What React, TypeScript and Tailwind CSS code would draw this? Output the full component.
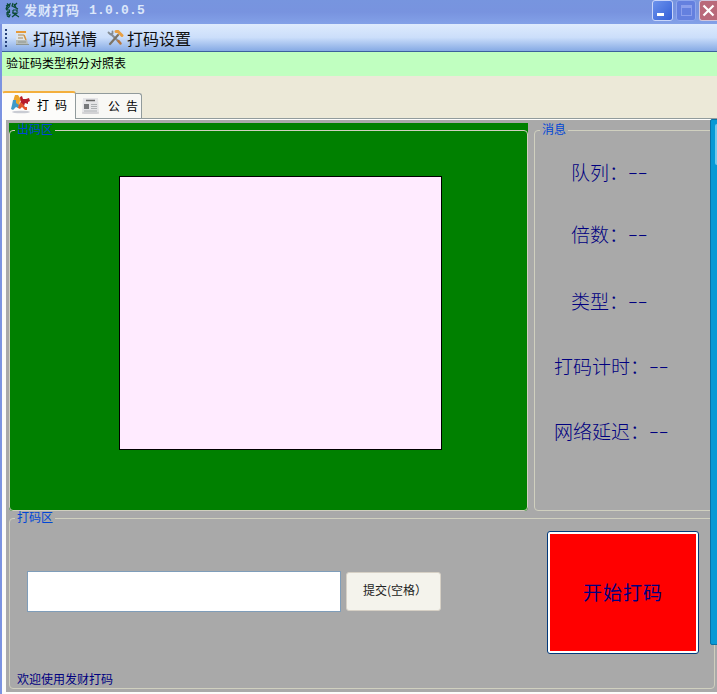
import type { ReactNode } from "react";

const sans = "font-['Liberation_Sans','Noto_Sans_CJK_SC',sans-serif]";
const cjk = "font-['Noto_Sans_CJK_SC',sans-serif]";

function Logo() {
  return (
    <svg width="15" height="16" viewBox="0 0 15 16" fill="none" stroke="#0b4a35" strokeWidth="1.200">
      <path d="M1 4l4-2-1 3-3 3M2 1.500l3 3M8 1L7 4l6 3M12 1L9 4M1.500 8h3v2.500H2V13h3l-1 2-2-1M8 8h4v2M8 8v2.500M7 11h5l-5 4M8 11l6 4" />
      <path d="M3 3L1 7M9 2l2 4M3 9v4" strokeWidth="1.500" />
    </svg>
  );
}

function DetailsIcon() {
  return (
    <svg width="15" height="16" viewBox="0 0 15 16">
      <path d="M2 1h10l-1 10H1z" fill="#dfe5e8" />
      <path d="M1 2h10" stroke="#e79a38" strokeWidth="2" />
      <path d="M3 5h6M3 8h5" stroke="#a98a5c" />
      <path d="M9 5l2 5" stroke="#d8943c" strokeWidth="1.500" />
      <path d="M1 10h11l1 4H1z" fill="#b7bdb9" />
      <path d="M1 14.500h13M3 12h8" stroke="#8e9590" />
    </svg>
  );
}

function ToolsIcon() {
  return (
    <svg width="17" height="17" viewBox="0 0 17 17" fill="none" strokeLinecap="round">
      <path d="M4 5l8 8" stroke="#858d95" strokeWidth="2.200" />
      <path d="M1.500 3.500l2 2 2-1V2.500" stroke="#848c94" strokeWidth="1.800" />
      <path d="M11 6l-8 9" stroke="#7c7466" strokeWidth="2.200" />
      <path d="M9 2.500l2 0 4 4" stroke="#e8a044" strokeWidth="3" />
      <path d="M11.500 12l2 2.500" stroke="#b8763e" strokeWidth="2.500" />
    </svg>
  );
}

function PuzzleIcon() {
  return (
    <svg width="23" height="21" viewBox="0 0 23 21">
      <ellipse cx="12" cy="19" rx="9" ry="1.300" fill="#c9ccd3" />
      <path d="M5 5l1-3 3 0 2 3 2 0 0 2-2 1-1 3 1 4-2 0-3-4-2-1z" fill="#eda52b" />
      <path d="M4 7l3 0 0 3 3 2-1 3-2-1-3 3-2-1 1-4z" fill="#3f9ac8" />
      <path d="M11 4l2-1 1 3 3 0 3-1 1 3-2 1 0 2-3-1-1 3-3-3z" fill="#b71b2b" />
      <path d="M11 9l3 2 2 3 2 0 0 3-2 0-3-3-2 2-2-1z" fill="#e0562b" />
    </svg>
  );
}

function NewsIcon() {
  return (
    <svg width="20" height="18" viewBox="0 0 20 18">
      <path d="M2 1h15l1 14-2 2H3l-2-2z" fill="#e5e5e7" />
      <path d="M1 16h17" stroke="#c0c0c2" />
      <path d="M5 3.500h9" stroke="#696969" strokeWidth="1.500" />
      <rect x="3" y="7" width="5" height="5" fill="#77797b" />
      <path d="M10 7.500h6M10 9.500h6M10 11.500h6M3 14h13" stroke="#acb0b2" />
    </svg>
  );
}

function Group({ title, className, children }: { title: string; className: string; children?: ReactNode }) {
  return (
    <fieldset className={`min-w-0 rounded-[4px] border border-[#d0d0bf] ${className}`}>
      <legend className="ml-[5px] h-[15px] whitespace-nowrap px-[2px] text-[12px] leading-[11px] text-[#0046d5]">
        {title}
      </legend>
      {children}
    </fieldset>
  );
}

const readings = [
  { name: "队列", row: "mt-[19px] pl-[36px]" },
  { name: "倍数", row: "mt-[32px] pl-[36px]" },
  { name: "类型", row: "mt-[37px] pl-[36px]" },
  { name: "打码计时", row: "mt-[35px] pl-[19px]" },
  { name: "网络延迟", row: "mt-[35px] pl-[19px]" },
];

export default function App() {
  return (
    <div className={`relative flex h-[694px] w-[717px] flex-col overflow-hidden bg-[#ece9d8] ${sans}`}>
      <header className="flex h-[24px] shrink-0 items-start bg-gradient-to-b from-[#7795df] via-[#7893df] to-[#83a1e8] pl-[5px]">
        <div className="mt-[2px] w-[19px]"><Logo /></div>
        <h1 className={`mt-[2px] flex whitespace-pre text-[#dce7fa] ${cjk}`}>
          <span className="w-[65px] text-[13px] font-bold leading-[16px] tracking-[1px]">发财打码</span>
          <span className="font-['Liberation_Mono',monospace] text-[13px] font-bold leading-[17px] tracking-[0.2px]">1.0.0.5</span>
        </h1>
        <div className="ml-auto flex gap-[3px]">
          <button className="flex h-[21px] w-[21px] items-end rounded-[3px] border border-[#c9d6fa] bg-gradient-to-br from-[#6c92ec] to-[#345ed6] pb-[4px] pl-[4px]">
            <span className="h-[3px] w-[7px] bg-white" />
          </button>
          <button className="flex h-[21px] w-[20px] items-center justify-center rounded-[3px] border border-[#8ea6ed] bg-[#6480df]">
            <span className="h-[11px] w-[11px] border border-t-[3px] border-[#8b9fec]" />
          </button>
          <button className="flex h-[21px] w-[18px] items-center justify-center rounded-l-[3px] border border-r-0 border-[#d1c6dc] bg-[#b9697a]">
            <svg width="13" height="13" viewBox="0 0 13 13" stroke="white" strokeWidth="2.200"><path d="M1.500 1.500l10 10M11.500 1.500l-10 10" /></svg>
          </button>
        </div>
      </header>

      <div className="flex min-h-0 flex-1">
        <div className="w-[2px] shrink-0 bg-[#7b93e1]" />
        <div className="flex min-w-0 flex-1 flex-col">
          <nav className={`flex h-[28px] shrink-0 items-center border-b border-[#3b619c] bg-gradient-to-b from-[#deebfd] via-[#cbdefa] to-[#86aae4] text-[16px] leading-[20px] text-[#101010] ${cjk}`}>
            <span className="ml-[3px] mr-[8px] h-[18px] border-l-2 border-dotted border-[#27417b]" />
            <DetailsIcon />
            <span className="ml-[3px] w-[74px] whitespace-nowrap">打码详情</span>
            <ToolsIcon />
            <span className="ml-[3px] whitespace-nowrap">打码设置</span>
          </nav>
          <div className={`h-[24px] shrink-0 bg-[#c0ffc0] pl-[4px] text-[12px] leading-[22px] text-black ${cjk}`}>验证码类型积分对照表</div>
          <div className="flex h-[43px] shrink-0 items-end border-b border-[#919b9c]">
            <div className="-mb-px flex h-[28px] w-[74px] rounded-t-[3px] border border-b-0 border-t-[2px] border-[#919b9c] border-l-white border-t-[#f3af3d] bg-[#fcfcfa] pl-[6px]">
              <PuzzleIcon />
              <span className={`ml-[5px] mt-[4px] flex gap-[6px] text-[12px] leading-[16px] ${cjk}`}><span>打</span><span>码</span></span>
            </div>
            <div className="flex h-[25px] w-[66px] items-center rounded-tr-[3px] border border-b-0 border-l-0 border-[#919b9c] bg-[#f8f8f5] pl-[5px]">
              <NewsIcon />
              <span className={`ml-[7px] flex gap-[6px] text-[12px] leading-[16px] ${cjk}`}><span>公</span><span>告</span></span>
            </div>
          </div>
          <main className={`flex min-h-0 flex-1 flex-col border-b-2 border-l-4 border-t border-[#fcfcfa] bg-[#a9a9a9] pl-[3px] pt-[3px] ${cjk}`}>
            <div className="flex h-[388px] gap-[6px]">
              <section className="w-[519px] rounded-bl-[4px] rounded-br-[4px] bg-[#008000]">
                <Group title="出码区" className="h-[388px] w-[519px]">
                  <div className="ml-[109px] mt-[38px] h-[274px] w-[323px] border border-black bg-[#ffebff]" />
                </Group>
              </section>
              <Group title="消息" className="h-[388px] w-[181px]">
                {readings.map((r) => (
                  <div key={r.name} className={`flex h-[30px] whitespace-nowrap text-[19px] leading-[30px] font-light text-[#000080] ${r.row}`}>
                    <span>{r.name}</span>
                    <span className="w-[19px]">：</span>
                    <span className="text-[30px] font-thin leading-[24px]">--</span>
                  </div>
                ))}
              </Group>
            </div>
            <Group title="打码区" className="h-[178px] w-[706px]">
              <div className="flex h-[146px] items-start">
                <input className="ml-[17px] mt-[45px] h-[41px] w-[314px] border border-[#7f9db9] bg-white" />
                <button className="ml-[5px] mt-[46px] h-[39px] w-[95px] whitespace-nowrap rounded-[3px] border border-[#d6d0c5] bg-[#f4f3ec] pb-[4px] pl-[3px] text-[12px] leading-[16px] text-[#222]">提交(空格）</button>
                <button className="ml-[106px] mt-[5px] h-[123px] w-[152px] rounded-[3px] border border-[#00387a] bg-white p-[2px]">
                  <span className="flex h-full items-center justify-center bg-[#ff0000] text-[19px] tracking-[1px] text-[#000080]">开始打码</span>
                </button>
              </div>
              <p className="pl-[7px] text-[12px] leading-[14px] text-[#000080]">欢迎使用发财打码</p>
            </Group>
          </main>
        </div>
      </div>
      <aside className="absolute left-[710px] top-[119px] h-[526px] w-[8px] rounded-l-[2px] border border-[#0872a5] bg-[#0799d5]">
        <div className="ml-[4px] mt-[4px] h-[41px] w-[3px] rounded-l-[2px] bg-[#70caed]" />
      </aside>
    </div>
  );
}
